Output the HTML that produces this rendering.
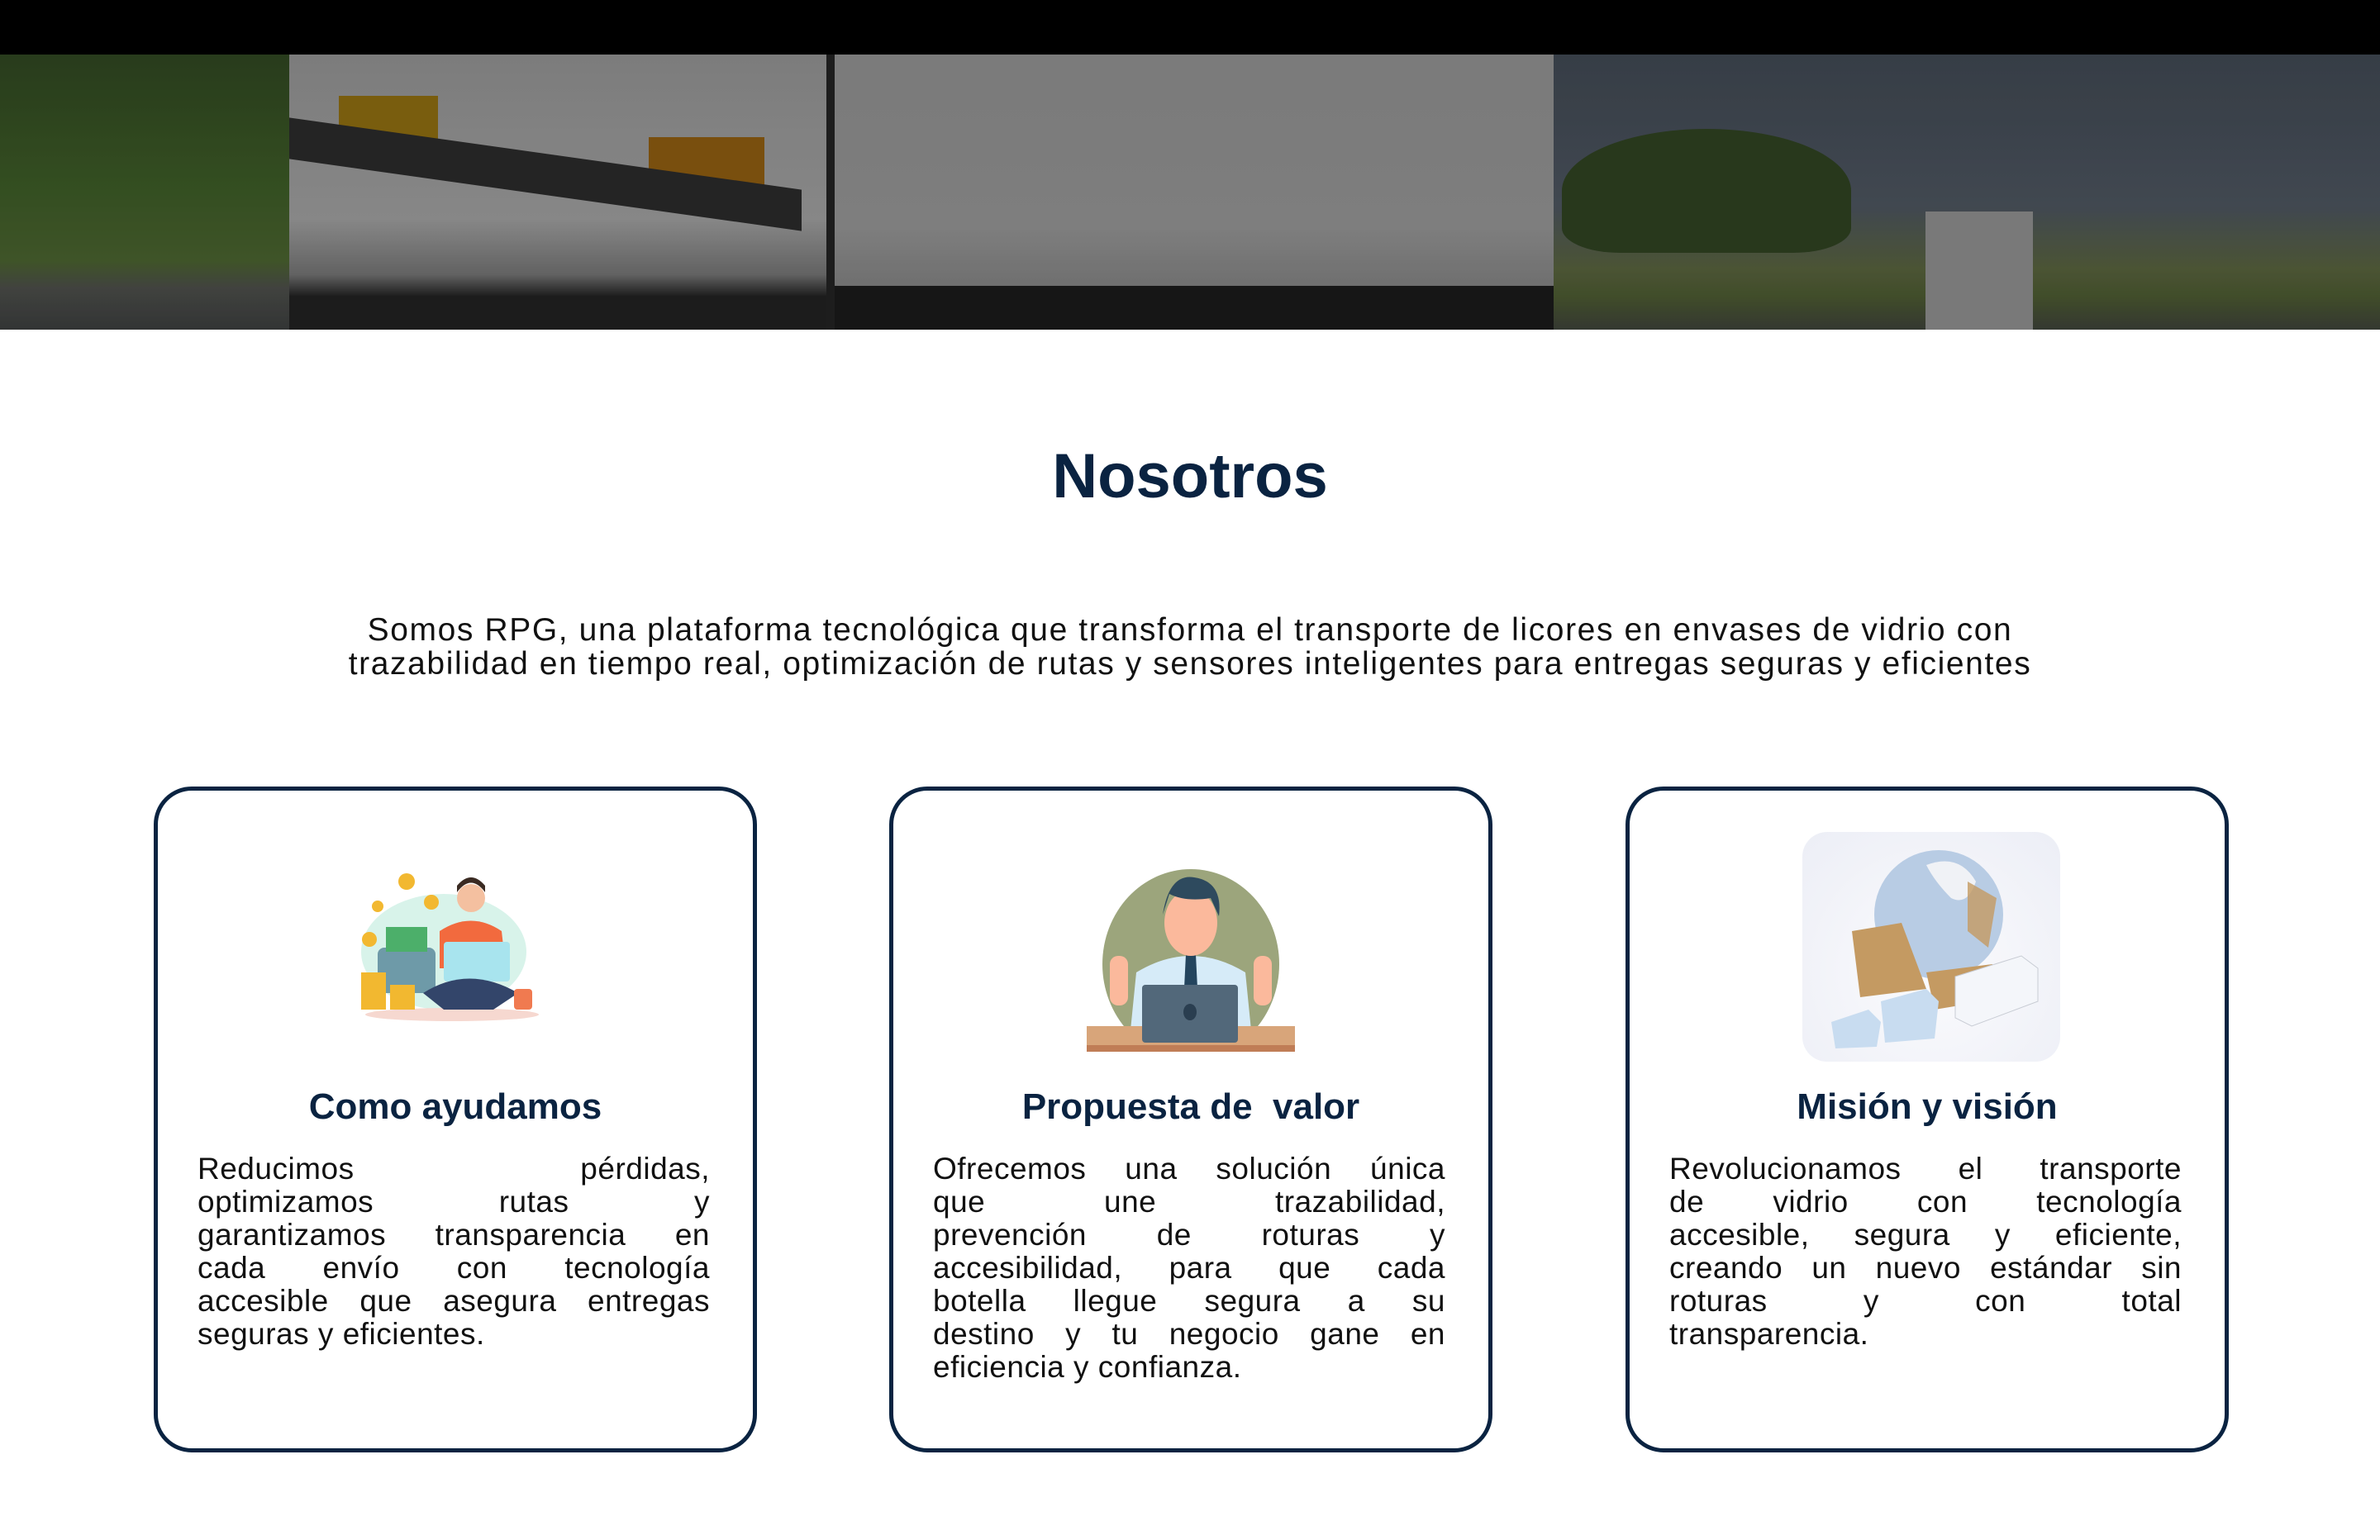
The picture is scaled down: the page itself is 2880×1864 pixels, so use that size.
<!DOCTYPE html>
<html><head><meta charset="utf-8"><style>
*{margin:0;padding:0;box-sizing:border-box}
body{width:2880px;height:1864px;background:#fff;font-family:"Liberation Sans",sans-serif;overflow:hidden;position:relative}
.top{position:absolute;left:0;top:0;width:2880px;height:66px;background:#000}
.hero{position:absolute;left:0;top:66px;width:2880px;height:333px;overflow:hidden;background:linear-gradient(180deg,#3a4148 0%,#4a5058 60%,#3c4a2c 80%,#2c3228 100%)}
.abs{position:absolute}
h1{position:absolute;top:533px;left:0;width:2880px;text-align:center;font-size:76px;font-weight:bold;color:#0a2341}
.intro{position:absolute;top:742px;left:0;width:2880px;text-align:center;font-size:39px;line-height:41px;color:#111;letter-spacing:1.6px}
.card{position:absolute;top:952px;width:730px;height:806px;border:5px solid #0a2341;border-radius:46px}
.card h2{position:absolute;top:358px;left:0;width:100%;text-align:center;font-size:44px;color:#0a2341;font-weight:bold}
.txt{position:absolute;left:48px;top:438px;width:620px;font-size:37px;line-height:40px;color:#111;letter-spacing:0.5px}
.l{text-align:justify;text-align-last:justify;white-space:nowrap}
.e{text-align:left;white-space:nowrap}
</style></head><body>
<div class="top"></div>
<div class="hero">
 <div class="abs" style="left:0;top:0;width:380px;height:333px;background:linear-gradient(180deg,#2e4420,#3c5a26 50%,#48602e 75%,#4a4c48 85%,#3a3c3c)"></div>
 <div class="abs" style="left:1880px;top:0;width:1000px;height:333px;background:linear-gradient(180deg,#3e4650,#4a525c 55%,#56603c 78%,#4a5830 88%,#3c4038)"></div>
 <div class="abs" style="left:1890px;top:90px;width:350px;height:150px;background:#2e4020;border-radius:50% 50% 20% 20%"></div>
 <div class="abs" style="left:350px;top:0;width:650px;height:333px;background:linear-gradient(180deg,#8e8e8e,#9a9a9a 60%,#707070 80%,#202020 88%)"></div>
 <div class="abs" style="left:1000px;top:0;width:880px;height:300px;background:linear-gradient(180deg,#8c8c8c,#909090 70%,#7a7a7a)"></div>
 <div class="abs" style="left:1000px;top:280px;width:880px;height:53px;background:#1a1a1a"></div>
 <div class="abs" style="left:410px;top:50px;width:120px;height:60px;background:#8a6a10"></div>
 <div class="abs" style="left:785px;top:100px;width:140px;height:60px;background:#8a5a10"></div>
 <div class="abs" style="left:350px;top:120px;width:620px;height:50px;background:#2a2a2a;transform:skewY(8deg)"></div>
 <div class="abs" style="left:1000px;top:0;width:10px;height:333px;background:#222"></div>
 <div class="abs" style="left:2330px;top:190px;width:130px;height:143px;background:#8a8a8a"></div>
 <div class="abs" style="left:0;top:0;width:2880px;height:333px;background:rgba(0,0,0,0.12)"></div>
</div>

<h1>Nosotros</h1>
<div class="intro">Somos RPG, una plataforma tecnológica que transforma el transporte de licores en envases de vidrio con<br>trazabilidad en tiempo real, optimización de rutas y sensores inteligentes para entregas seguras y eficientes</div>

<div class="card" style="left:186px">
 <svg class="abs" style="left:236px;top:95px" width="234" height="184" viewBox="0 0 234 184">
  <ellipse cx="110" cy="100" rx="100" ry="70" fill="#d8f3ea"/>
  <ellipse cx="120" cy="176" rx="105" ry="8" fill="#f6d8d0"/>
  <rect x="30" y="95" width="70" height="55" rx="8" fill="#6e9aa8"/>
  <rect x="40" y="70" width="50" height="30" fill="#4caf6a"/>
  <rect x="10" y="125" width="30" height="45" fill="#f2b830"/>
  <rect x="45" y="140" width="30" height="30" fill="#f2b830"/>
  <circle cx="65" cy="15" r="10" fill="#f2b830"/><circle cx="95" cy="40" r="9" fill="#f2b830"/><circle cx="20" cy="85" r="9" fill="#f2b830"/><circle cx="30" cy="45" r="7" fill="#f2b830"/>
  <circle cx="143" cy="35" r="17" fill="#f4c0a0"/><path d="M126 28 Q143 5 160 28 L160 20 Q143 0 126 20Z" fill="#3a2a22"/>
  <path d="M105 75 Q143 50 180 75 L185 120 L105 120Z" fill="#f26a3e"/>
  <rect x="110" y="88" width="80" height="48" rx="4" fill="#a8e4ee"/>
  <path d="M85 150 Q140 115 200 150 L170 170 L110 170Z" fill="#33456a"/>
  <rect x="195" y="145" width="22" height="25" rx="4" fill="#f07a50"/>
 </svg>
 <h2>Como ayudamos</h2>
 <div class="txt"><div class="l">Reducimos pérdidas,</div><div class="l">optimizamos rutas y</div><div class="l">garantizamos transparencia en</div><div class="l">cada envío con tecnología</div><div class="l">accesible que asegura entregas</div><div class="e">seguras y eficientes.</div></div>
</div>

<div class="card" style="left:1076px">
 <svg class="abs" style="left:234px;top:80px" width="252" height="236" viewBox="0 0 252 236">
  <ellipse cx="126" cy="130" rx="107" ry="115" fill="#9ca57c"/>
  <path d="M60 140 Q126 100 192 140 L200 220 L52 220Z" fill="#d6ebf8"/>
  <path d="M120 118 L132 118 L136 200 L126 210 L116 200Z" fill="#24455e"/>
  <ellipse cx="126" cy="80" rx="32" ry="40" fill="#fbb99c"/>
  <path d="M92 70 Q100 20 130 25 Q165 30 160 72 L150 50 Q120 55 100 45Z" fill="#2e4a5e"/>
  <rect x="28" y="120" width="22" height="60" rx="10" fill="#fbb99c"/>
  <rect x="202" y="120" width="22" height="60" rx="10" fill="#fbb99c"/>
  <rect x="0" y="205" width="252" height="31" fill="#d8a57a"/><rect x="0" y="228" width="252" height="8" fill="#c07d56"/>
  <rect x="67" y="155" width="116" height="70" rx="4" fill="#52687a"/><ellipse cx="125" cy="188" rx="8" ry="10" fill="#2a3e50"/>
 </svg>
 <h2>Propuesta de&nbsp; valor</h2>
 <div class="txt"><div class="l">Ofrecemos una solución única</div><div class="l">que une trazabilidad,</div><div class="l">prevención de roturas y</div><div class="l">accesibilidad, para que cada</div><div class="l">botella llegue segura a su</div><div class="l">destino y tu negocio gane en</div><div class="e">eficiencia y confianza.</div></div>
</div>

<div class="card" style="left:1967px">
 <div class="abs" style="left:209px;top:50px;width:312px;height:278px;border-radius:30px;background:radial-gradient(circle at 50% 60%,#fbfbfd,#eceef6)">
  <svg width="312" height="278" viewBox="0 0 312 278">
   <circle cx="165" cy="100" r="78" fill="#b8cce4"/>
   <path d="M150 40 Q190 25 210 60 Q200 90 180 80 Q160 60 150 40Z" fill="#f0f2f6"/>
   <path d="M60 120 L120 110 L150 190 L70 200Z" fill="#c49a62"/>
   <path d="M150 170 L230 160 L250 200 L160 215Z" fill="#c49a62"/>
   <path d="M200 60 L235 80 L225 140 L200 120Z" fill="#c49a62" opacity="0.8"/>
   <path d="M185 175 L265 150 L285 165 L285 205 L205 235 L185 225Z" fill="#f4f6fa" stroke="#c8ccd4"/>
   <path d="M95 205 L150 190 L165 205 L160 250 L100 255Z" fill="#c8dcf0"/>
   <path d="M35 230 L80 215 L95 230 L90 260 L40 262Z" fill="#c8dcf0"/>
  </svg>
 </div>
 <h2>Misión y visión</h2>
 <div class="txt"><div class="l">Revolucionamos el transporte</div><div class="l">de vidrio con tecnología</div><div class="l">accesible, segura y eficiente,</div><div class="l">creando un nuevo estándar sin</div><div class="l">roturas y con total</div><div class="e">transparencia.</div></div>
</div>
</body></html>
